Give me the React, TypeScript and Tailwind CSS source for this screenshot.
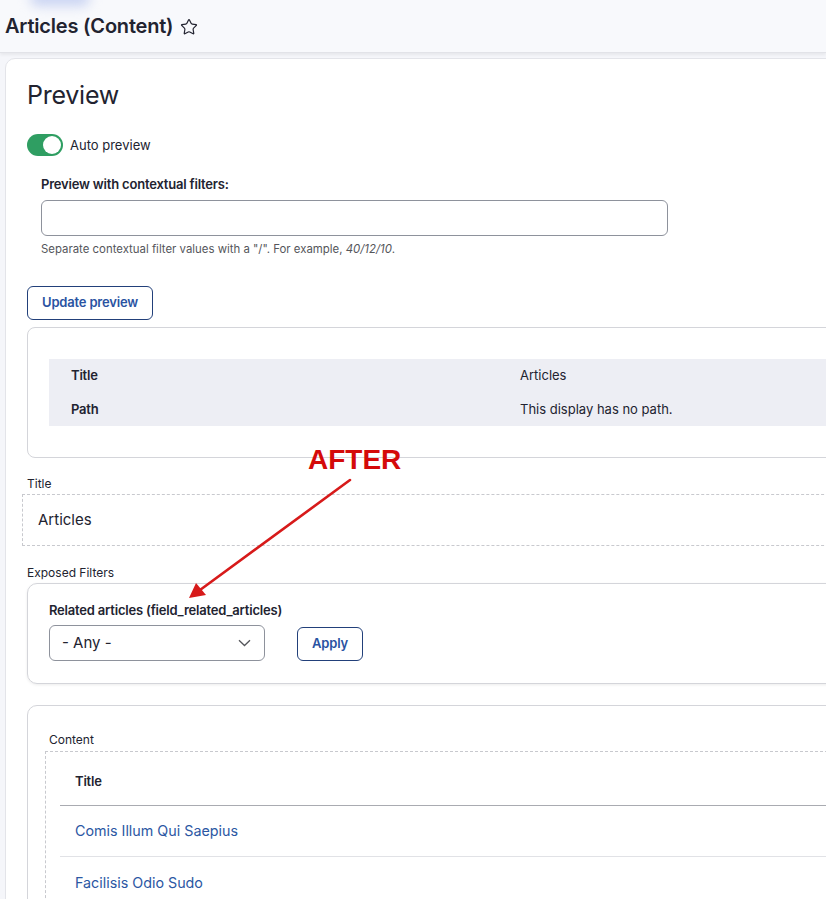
import { Star } from 'lucide-react';

const font = { fontFamily: 'Inter, "Noto Sans", sans-serif' };

function Toggle() {
  return (
    <span className="relative inline-flex h-[22px] w-[36px] items-center rounded-full bg-[#2f9e62]">
      <span className="absolute right-[2px] h-[18px] w-[18px] rounded-full bg-white" />
    </span>
  );
}

function OutlineButton({ children, className = '' }: { children: React.ReactNode; className?: string }) {
  return (
    <button
      type="button"
      className={`flex h-[34px] items-center justify-center whitespace-nowrap rounded-[6px] border border-[#22407a] bg-white text-[13px] font-semibold tracking-[-0.015em] text-[#2a53a2] ${className}`}
    >
      {children}
    </button>
  );
}

export default function App() {
  return (
    <div className="relative h-[899px] w-[826px] overflow-hidden bg-[#f5f6fa] text-[#222330]" style={font}>
      {/* toolbar glow */}
      <div className="absolute left-[30px] top-[-10px] h-[16px] w-[60px] rounded-full bg-[#c9d3f2] blur-[6px]" />

      <header className="flex h-[53px] items-center gap-[7px] border-b border-[#e2e3e8] bg-[#f8f9fc] pl-[5px] shadow-[0_2px_3px_rgba(0,0,0,0.06)]">
        <h1 className="text-[20px] font-semibold tracking-[-0.01em]">Articles (Content)</h1>
        <Star size={18} strokeWidth={1.6} className="mt-[1px] text-[#222330]" />
      </header>

      <main className="pl-[5px] pt-[5px]">
        <div className="w-[900px] rounded-l-[10px] border border-[#e3e4e9] bg-white pb-10 pl-[21px] pt-[20px]">
          <h2 className="text-[25px] font-normal leading-[32px] tracking-[-0.01em]">Preview</h2>

          <div className="mt-[23px] flex items-center gap-[7px]">
            <Toggle />
            <span className="mt-[1px] text-[13px]">Auto preview</span>
          </div>

          <div className="pl-[14px]">
            <label className="mt-[19px] block text-[13px] font-semibold leading-[18px] tracking-[-0.015em]">
              Preview with contextual filters:
            </label>
            <input
              type="text"
              className="mt-[7px] block h-[36px] w-[627px] rounded-[6px] border border-[#8e929c] bg-white px-3"
            />
            <p className="mt-[5px] text-[11.4px] leading-[16px] text-[#55565b]">
              Separate contextual filter values with a "/". For example, <em>40/12/10</em>.
            </p>
          </div>

          <OutlineButton className="mt-[29px] w-[126px]">Update preview</OutlineButton>

          <section className="mt-[7px] rounded-l-[8px] border border-[#d4d5da] pb-[31px] pl-[21px] pt-[31px]">
            <table className="w-full border-collapse bg-[#edeef4] text-[13px]">
              <tbody>
                <tr className="h-[34px]">
                  <th className="w-[449px] pl-[22px] text-left font-semibold tracking-[-0.015em]">Title</th>
                  <td className="pl-[22px]">Articles</td>
                </tr>
                <tr className="h-[33px]">
                  <th className="pl-[22px] text-left font-semibold tracking-[-0.015em]">Path</th>
                  <td className="pl-[22px]">This display has no path.</td>
                </tr>
              </tbody>
            </table>
          </section>

          <div className="mt-[18px] text-[12px] leading-[16px]">Title</div>
          <div className="ml-[-5px] mt-[2px] flex h-[52px] items-center border border-dashed border-[#c8c9ce] pl-[15px] text-[15px]">
            Articles
          </div>

          <div className="mt-[19px] text-[12px] leading-[16px]">Exposed Filters</div>
          <section className="mt-[2px] rounded-l-[10px] border border-[#d4d5da] pb-[22px] pl-[21px] pt-[17px] shadow-[0_1px_3px_rgba(0,0,0,0.08)]">
            <div className="text-[13px] font-semibold leading-[18px] tracking-[-0.015em]">
              Related articles (field_related_articles)
            </div>
            <div className="mt-[6px] flex items-start gap-[32px]">
              <div className="flex h-[36px] w-[216px] items-center justify-between rounded-[6px] border border-[#8e929c] pl-[12px] pr-[13px] text-[15px]">
                <span>- Any -</span>
                <svg width="13" height="8" viewBox="0 0 13 8" fill="none">
                  <path d="M1 1.2l5.5 5.3L12 1.2" stroke="#55565b" strokeWidth="1.3" />
                </svg>
              </div>
              <OutlineButton className="mt-[2px] w-[66px]">Apply</OutlineButton>
            </div>
          </section>

          <section className="mt-[21px] rounded-l-[10px] border border-[#d4d5da] pl-[21px] pt-[26px]">
            <div className="text-[12px] leading-[16px]">Content</div>
            <div className="ml-[-4px] mt-[3px] border border-b-0 border-dashed border-[#c8c9ce] pl-[14px]">
              <table className="w-full border-collapse text-left">
                <thead>
                  <tr className="border-b border-[#a9abb1]">
                    <th className="pb-[15px] pl-[15px] pt-[20px] text-[13px] font-semibold leading-[18px] tracking-[-0.015em]">
                      Title
                    </th>
                  </tr>
                </thead>
                <tbody className="text-[14.3px] text-[#2b57a3]">
                  <tr className="h-[51px] border-b border-[#e1e2e6]">
                    <td className="pl-[15px]">Comis Illum Qui Saepius</td>
                  </tr>
                  <tr className="h-[51px]">
                    <td className="pl-[15px]">Facilisis Odio Sudo</td>
                  </tr>
                </tbody>
              </table>
            </div>
          </section>
        </div>
      </main>

      {/* annotation */}
      <div
        className="absolute left-[308px] top-[444px] text-[28px] font-bold leading-[32px] text-[#d40a0a]"
        style={{ fontFamily: '"Liberation Sans", Arial, sans-serif' }}
      >
        AFTER
      </div>
      <svg className="pointer-events-none absolute left-0 top-0" width="826" height="899">
        <line x1="350" y1="480" x2="200" y2="590" stroke="#d71a1a" strokeWidth="2.6" strokeLinecap="round" />
        <polygon points="189,598 196,583 206,595" fill="#d71a1a" />
      </svg>
    </div>
  );
}
